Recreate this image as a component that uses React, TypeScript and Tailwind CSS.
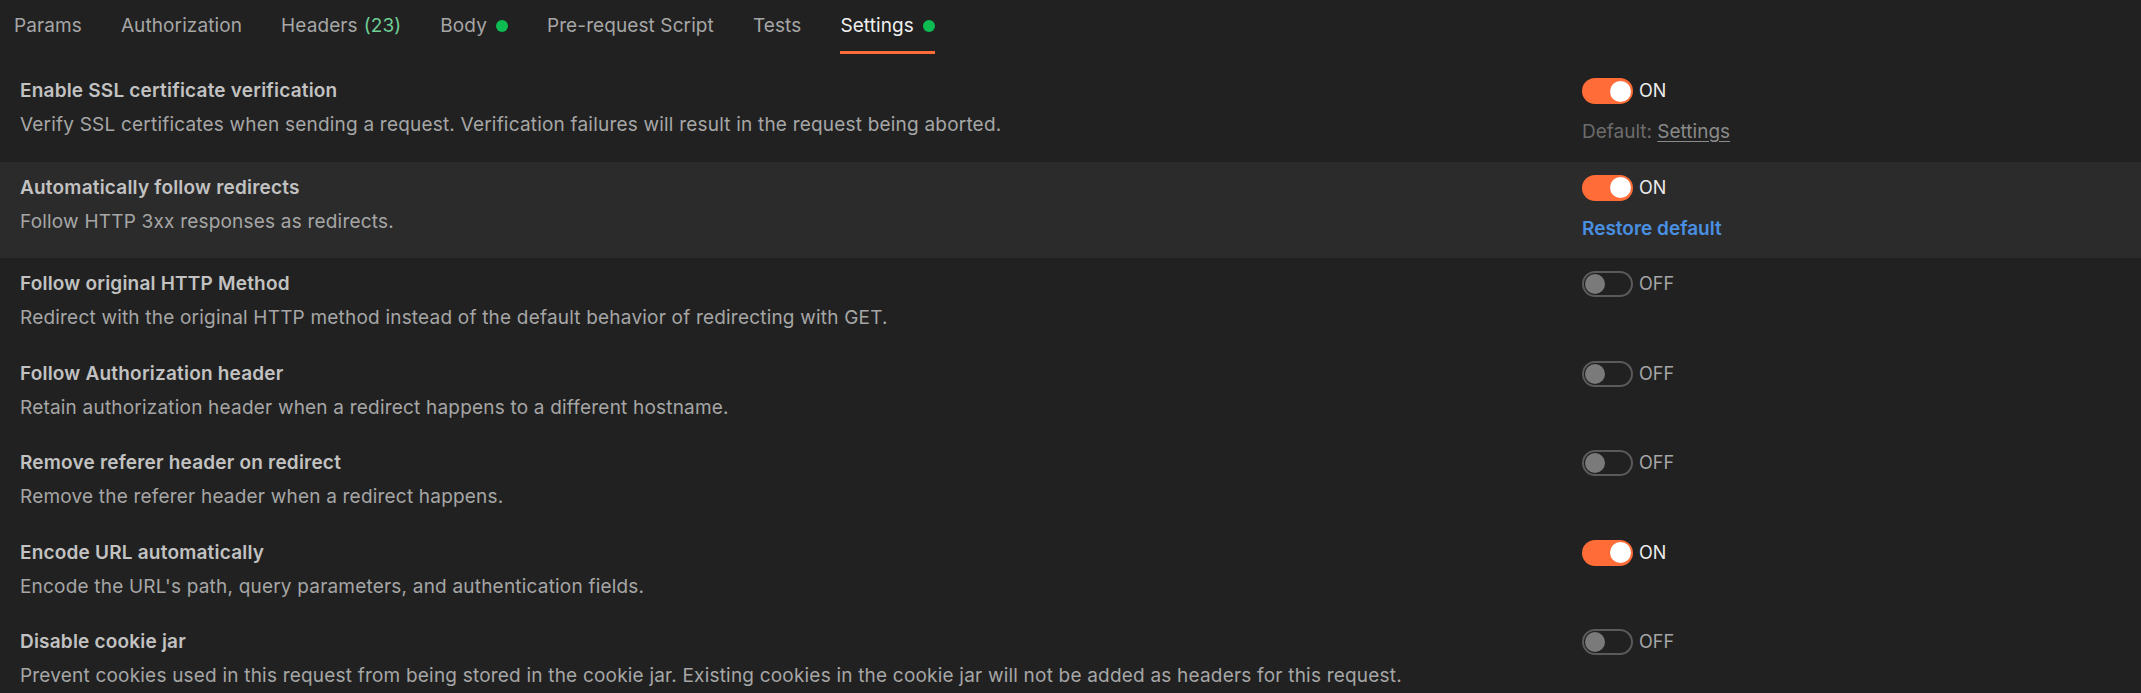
import React from 'react';

type Setting = {
    title: string;
    description: string;
    on: boolean;
    highlight?: boolean;
    extra?: 'default' | 'restore';
};

const TABS = [
    { label: 'Params' },
    { label: 'Authorization' },
    { label: 'Headers', count: '(23)' },
    { label: 'Body', dot: true },
    { label: 'Pre-request Script' },
    { label: 'Tests' },
    { label: 'Settings', dot: true, active: true },
];

const SETTINGS: Setting[] = [
    {
        title: 'Enable SSL certificate verification',
        description: 'Verify SSL certificates when sending a request. Verification failures will result in the request being aborted.',
        on: true,
        extra: 'default',
    },
    {
        title: 'Automatically follow redirects',
        description: 'Follow HTTP 3xx responses as redirects.',
        on: true,
        highlight: true,
        extra: 'restore',
    },
    {
        title: 'Follow original HTTP Method',
        description: 'Redirect with the original HTTP method instead of the default behavior of redirecting with GET.',
        on: false,
    },
    {
        title: 'Follow Authorization header',
        description: 'Retain authorization header when a redirect happens to a different hostname.',
        on: false,
    },
    {
        title: 'Remove referer header on redirect',
        description: 'Remove the referer header when a redirect happens.',
        on: false,
    },
    {
        title: 'Encode URL automatically',
        description: "Encode the URL's path, query parameters, and authentication fields.",
        on: true,
    },
    {
        title: 'Disable cookie jar',
        description: 'Prevent cookies used in this request from being stored in the cookie jar. Existing cookies in the cookie jar will not be added as headers for this request.',
        on: false,
    },
];

const Toggle = ({ on }: { on: boolean }) => (
    <div className="flex h-[28px] items-center gap-[6px]">
        {on ? (
            <div className="flex h-[26px] w-[51px] items-center justify-end rounded-full bg-[#ff6c37] pr-[2px]">
                <div className="h-[21px] w-[21px] rounded-full bg-white" />
            </div>
        ) : (
            <div className="flex h-[26px] w-[51px] items-center rounded-full border-2 border-[#5a5a5a] pl-[1px]">
                <div className="h-[20px] w-[20px] rounded-full bg-[#7a7a7a]" />
            </div>
        )}
        <span className={`text-[18px] leading-[24px] ${on ? 'text-[#ececec]' : 'text-[#a6a6a6]'}`}>
            {on ? 'ON' : 'OFF'}
        </span>
    </div>
);

const SettingRow = ({ item }: { item: Setting }) => (
    <div className={`flex pl-5 pr-5 pt-[14px] pb-[17.5px] ${item.highlight ? 'bg-[#2b2b2b]' : ''}`}>
        <div className="flex-1 tracking-[0.2px]">
            <div className="text-[19px] font-semibold leading-[24px] text-[#c2c2c2]">{item.title}</div>
            <div className="mt-[10px] text-[19px] leading-[24px] text-[#a6a6a6]">{item.description}</div>
        </div>
        <div className="-mt-[2px] w-[539px]">
            <Toggle on={item.on} />
            {item.extra === 'default' && (
                <div className="mt-[15px] text-[19px] leading-[24px] text-[#6c6c6c]">
                    Default: <span className="text-[#8a8a8a] underline underline-offset-[3px]">Settings</span>
                </div>
            )}
            {item.extra === 'restore' && (
                <div className="mt-[15px] text-[19px] font-semibold leading-[24px] text-[#4a90e2]">Restore default</div>
            )}
        </div>
    </div>
);

export default function App() {
    return (
        <div className="min-h-screen overflow-hidden bg-[#212121] font-['Inter',sans-serif]">
            {/* Request tabs */}
            <div className="flex h-[65px] items-start gap-[39px] pl-[14px]">
                {TABS.map(tab => (
                    <div key={tab.label} className="flex flex-col">
                        <div className="flex h-[51px] items-center gap-[9px] pt-[1px]">
                            <span className={`text-[19px] leading-[24px] tracking-[0.1px] ${tab.active ? 'text-[#f0f0f0]' : 'text-[#a6a6a6]'}`}>
                                {tab.label}
                                {tab.count && <span className="ml-[6px] text-[#6fcf97]">{tab.count}</span>}
                            </span>
                            {tab.dot && <span className="h-[12px] w-[12px] rounded-full bg-[#0cbb52]" />}
                        </div>
                        <div className={`h-[3px] ${tab.active ? 'bg-[#ff6c37]' : ''}`} />
                    </div>
                ))}
            </div>

            {/* Settings list */}
            <div>
                {SETTINGS.map(item => (
                    <SettingRow key={item.title} item={item} />
                ))}
            </div>
        </div>
    );
}
